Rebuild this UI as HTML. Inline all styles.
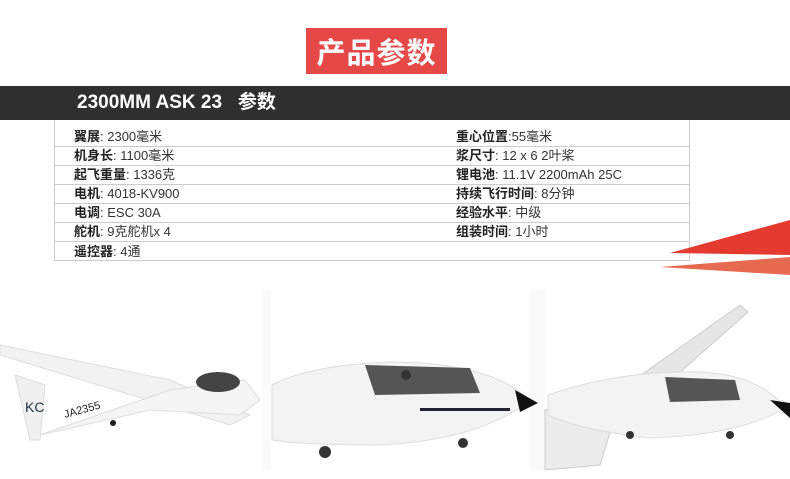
<!DOCTYPE html>
<html><head><meta charset="utf-8"><style>
*{margin:0;padding:0;box-sizing:border-box}
body{width:790px;height:479px;background:#fff;position:relative;overflow:hidden;font-family:"Liberation Sans","Noto Sans CJK SC",sans-serif}
.badge{position:absolute;left:306px;top:28px;width:141px;height:46px;background:#e64848;color:#fff;font:bold 29px "Noto Sans CJK SC",sans-serif;text-align:center;line-height:46px;letter-spacing:1px}
.bar{position:absolute;left:0;top:86px;width:790px;height:34px;background:#2f2f2f;color:#fff;font:bold 19px "Liberation Sans","Noto Sans CJK SC",sans-serif;line-height:34px;padding-left:77px}
.tbl{position:absolute;left:54px;top:120px;width:636px;height:141px;border:1px solid #ccc;border-top:none}
.row{position:absolute;left:0;width:634px;border-bottom:1px solid #ccc;font-size:13px;color:#333;font-family:"Liberation Sans","Noto Sans CJK SC",sans-serif}
.row span{position:absolute;bottom:1px;white-space:nowrap}
.row b{font-weight:bold;color:#222}
.l{left:19px}.r{left:401px}
</style></head><body>
<div class="badge">产品参数</div>
<div class="bar">2300MM ASK 23&nbsp;&nbsp; 参数</div>
<div class="tbl">
<div class="row" style="top:0;height:27px"><span class="l"><b>翼展</b>: 2300毫米</span><span class="r"><b>重心位置</b>:55毫米</span></div>
<div class="row" style="top:27px;height:19px"><span class="l"><b>机身长</b>: 1100毫米</span><span class="r"><b>浆尺寸</b>: 12 x 6 2叶桨</span></div>
<div class="row" style="top:46px;height:19px"><span class="l"><b>起飞重量</b>: 1336克</span><span class="r"><b>锂电池</b>: 11.1V 2200mAh 25C</span></div>
<div class="row" style="top:65px;height:19px"><span class="l"><b>电机</b>: 4018-KV900</span><span class="r"><b>持续飞行时间</b>: 8分钟</span></div>
<div class="row" style="top:84px;height:19px"><span class="l"><b>电调</b>: ESC 30A</span><span class="r"><b>经验水平</b>: 中级</span></div>
<div class="row" style="top:103px;height:19px"><span class="l"><b>舵机</b>: 9克舵机x 4</span><span class="r"><b>组装时间</b>: 1小时</span></div>
<div class="row" style="top:122px;height:19px;border-bottom:none"><span class="l"><b>遥控器</b>: 4通</span></div>
</div>
<svg style="position:absolute;left:650px;top:215px" width="140" height="70"><polygon points="140,5 140,40 20,38" fill="#e43a30"/><polygon points="140,42 140,60 10,52" fill="#e66a50"/></svg>
<svg style="position:absolute;left:0;top:290px" width="790" height="189">
<rect x="0" y="0" width="790" height="189" fill="#fff"/>
<rect x="263" y="0" width="8" height="180" fill="#fafafa"/><rect x="530" y="0" width="15" height="180" fill="#fafafa"/>
<polygon points="0,55 0,65 230,135 250,125 170,90" fill="#f2f2f2" stroke="#ddd"/>
<polygon points="15,85 30,150 40,150 45,95" fill="#f0f0f0" stroke="#ddd"/>
<polygon points="40,145 170,100 245,90 260,110 240,125 150,120" fill="#f5f5f5" stroke="#ddd"/>
<ellipse cx="218" cy="92" rx="22" ry="10" fill="#444"/>
<text x="25" y="122" font-size="14" fill="#234" font-family="Liberation Sans">KC</text>
<text x="65" y="128" font-size="11" fill="#222" transform="rotate(-15 65 128)" font-family="Liberation Sans">JA2355</text>
<circle cx="113" cy="133" r="3" fill="#222"/>
<path d="M272,95 Q310,75 390,72 Q490,72 530,110 Q480,150 380,155 Q300,155 272,150 Z" fill="#f3f3f3" stroke="#ddd"/>
<polygon points="365,75 470,78 480,103 375,105" fill="#555"/>
<circle cx="406" cy="85" r="5" fill="#333"/>
<polygon points="515,100 538,113 520,122" fill="#111"/>
<rect x="420" y="118" width="90" height="3" fill="#223"/>
<circle cx="325" cy="162" r="6" fill="#333"/><circle cx="463" cy="153" r="5" fill="#333"/>
<polygon points="620,100 740,15 748,22 660,100" fill="#e6e6e6" stroke="#ccc"/>
<polygon points="545,120 620,110 600,175 545,180" fill="#ececec" stroke="#ccc"/>
<path d="M548,105 Q620,80 700,82 Q760,85 785,118 Q740,145 650,148 Q580,140 548,125 Z" fill="#f3f3f3" stroke="#ddd"/>
<polygon points="665,87 735,90 740,110 670,112" fill="#555"/>
<polygon points="770,110 790,113 790,128" fill="#111"/>
<circle cx="630" cy="145" r="4" fill="#333"/><circle cx="730" cy="145" r="4" fill="#333"/>
</svg>
</body></html>
